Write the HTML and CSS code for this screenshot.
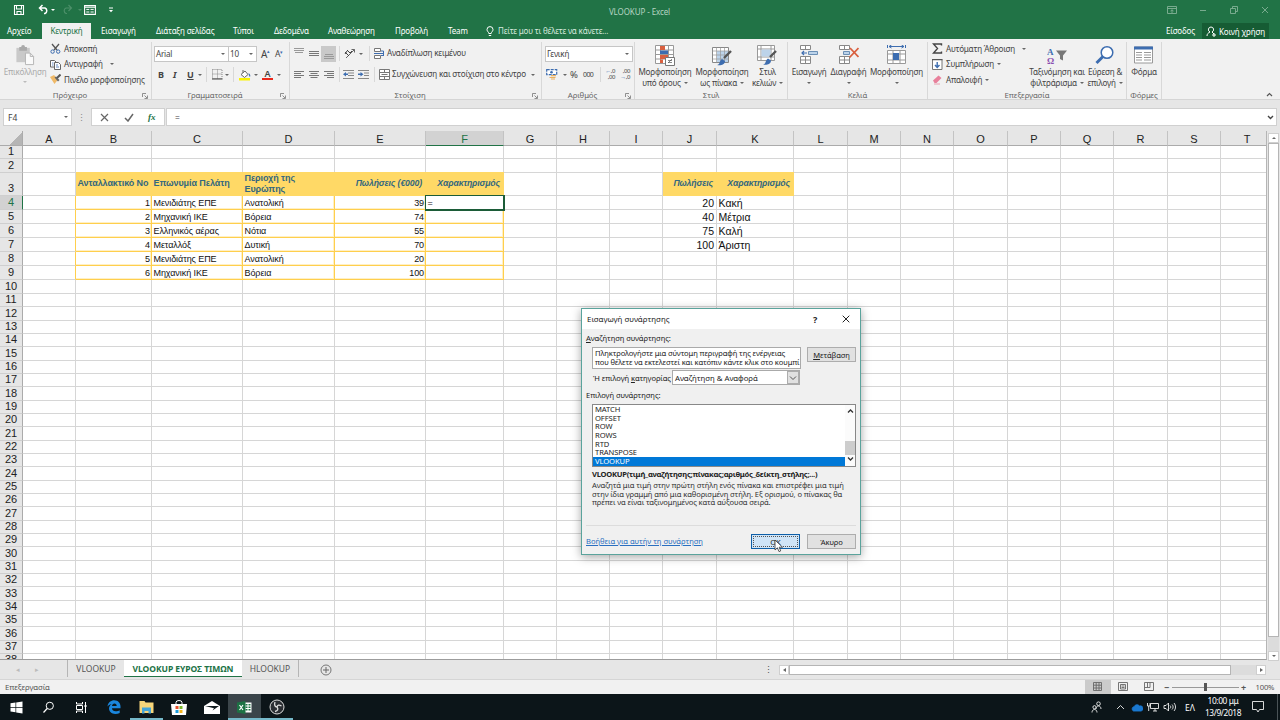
FILE: index.html
```html
<!DOCTYPE html>
<html lang="el">
<head>
<meta charset="utf-8">
<title>VLOOKUP - Excel</title>
<link rel="stylesheet" href="styles.css">
</head>
<body>
<div class="app">
  <header class="titlebar">
    <div class="qat">
      <svg width="12" height="12" viewBox="0 0 12 12"><path d="M1.5 1.5h9v9h-9z M3.5 1.5v3.5h5v-3.5 M4 10.5v-3h4v3" fill="none" stroke="#fff" stroke-width="1.1"/></svg>
      <svg width="12" height="12" viewBox="0 0 12 12"><path d="M4.500 1L1.500 4l3 3M2 4h5a3 3 0 0 1 0 5.500H6" fill="none" stroke="#fff" stroke-width="1.500"/></svg>
      <i class="dn white"></i>
      <svg width="12" height="12" viewBox="0 0 12 12"><path d="M7.500 1l3 3-3 3M10 4H5a3 3 0 0 0 0 5.500h1" fill="none" stroke="#4c8f69" stroke-width="1.200"/></svg>
      <i class="dn faint"></i>
      <svg width="12" height="12" viewBox="0 0 12 12"><path d="M.6 1.600h10.800v8.800H.600z M.6 3.300h10.800" fill="none" stroke="#fff" stroke-width="1.100"/><path d="M2.300 5.400h3M2.300 8h3M6.500 5.400h3.200M6.500 8h3.200" stroke="#fff"/></svg>
      <svg width="6" height="6" viewBox="0 0 6 6"><path d="M1 1h4" stroke="#fff"/><path d="M1 3h4L3 5.300z" fill="#fff"/></svg>
    </div>
    <div class="doc-title">VLOOKUP - Excel</div>
    <div class="win-buttons">
      <svg width="10" height="10" viewBox="0 0 10 10"><path d="M.5 1.500h9v7h-9zM.5 3.500h9M5 8V5M3.500 6L5 4.800 6.500 6" /></svg>
      <svg width="8" height="10" viewBox="0 0 8 10"><path d="M1 5.500h6"/></svg>
      <svg width="8" height="10" viewBox="0 0 8 10"><path d="M.5 3.500h5v5h-5zM2.500 3.500v-2h5v5h-2"/></svg>
      <svg width="8" height="10" viewBox="0 0 8 10"><path d="M1 2l6 6M7 2l-6 6"/></svg>
    </div>
  </header>

  <nav class="tabs">
    <span class="tab t-file">Αρχείο</span>
    <span class="tab active">Κεντρική</span>
    <span class="tab t-insert">Εισαγωγή</span>
    <span class="tab t-layout">Διάταξη σελίδας</span>
    <span class="tab t-formulas">Τύποι</span>
    <span class="tab t-data">Δεδομένα</span>
    <span class="tab t-review">Αναθεώρηση</span>
    <span class="tab t-view">Προβολή</span>
    <span class="tab t-team">Team</span>
    <svg class="bulb" width="8" height="11" viewBox="0 0 8 11"><path d="M2.800 7.500C2.800 6 1 5.500 1 3.600a3 3 0 0 1 6 0C7 5.500 5.200 6 5.200 7.500zM2.800 9.500h2.400" fill="none" stroke="#fff"/></svg>
    <span class="tab t-tell">Πείτε μου τι θέλετε να κάνετε...</span>
    <span class="tab t-login">Είσοδος</span>
    <span class="share"><svg width="11" height="11" viewBox="0 0 11 11"><path d="M5 1a2.600 2.600 0 0 1 1 5L8 8M5 1a2.600 2.600 0 0 0-1 5C2 7 1 8 1 10M6 9h4M8 7v4" fill="none" stroke="#fff"/></svg><b>Κοινή χρήση</b></span>
  </nav>

  <section class="ribbon">
    <div class="group g-clip">
      <div class="body">
        <div class="big paste">
          <svg width="20" height="22" viewBox="0 0 20 22"><path d="M1 3h14v15H1z" fill="#c9c9c9"/><path d="M4 2h2a2 2 0 0 1 4 0h2v4H4z" fill="#a9a9a9"/><path d="M10.500 8.500h5l3.500 3.500v8.500h-8.500zM15.500 8.500V12H19" fill="#fafafa" stroke="#b5b5b5"/></svg>
          <span class="lbl dim">Επικόλληση</span><i class="dn faint2"></i>
        </div>
        <div class="stack clip-list">
          <div class="item"><svg width="11" height="11" viewBox="0 0 11 11"><path d="M2 1l5 6M9 1L4 7" stroke="#555" stroke-width="1.300"/><circle cx="2.600" cy="8.600" r="1.700" fill="none" stroke="#3d6db0"/><circle cx="8.200" cy="8.600" r="1.700" fill="none" stroke="#3d6db0"/></svg><span class="lbl">Αποκοπή</span></div>
          <div class="item"><svg width="11" height="11" viewBox="0 0 11 11"><path d="M.5 1.500h4l1.500 1.500v5H.5z" fill="#fff" stroke="#666"/><path d="M4.500 3.500h4L10.500 5.500v5h-6z" fill="#fff" stroke="#666"/><path d="M6 6h2M6 8h3M2 4h1.500M2 6h1.500" stroke="#3d6db0" stroke-width=".8"/></svg><span class="lbl">Αντιγραφή</span><i class="dn gap5"></i></div>
          <div class="item"><svg width="11" height="11" viewBox="0 0 11 11"><path d="M0 3l4-2 4 4.500L4.500 10z" fill="#efb968"/><path d="M4.500 3.500l3.500 4 1.500-1.500L6 2.500z" fill="#666"/><path d="M7 4l3.500-3.500" stroke="#555" stroke-width="2"/></svg><span class="lbl">Πινέλο μορφοποίησης</span></div>
        </div>
      </div>
      <div class="caption">Πρόχειρο<svg class="launch" width="6" height="6" viewBox="0 0 6 6"><path d="M.5 4V.5H4M2.500 2.500L5 5M5.500 2.500v3h-3" fill="none" stroke="#777" stroke-width=".8"/></svg></div>
    </div>

    <div class="group g-font">
      <div class="body rows">
        <div class="row font-top">
          <span class="combo">Arial<i class="dn"></i></span><span class="combo size">10<i class="dn"></i></span>
          <span class="grow">A<sup>▴</sup></span><span class="grow sm">A<sup>▾</sup></span>
        </div>
        <div class="row font-bot">
          <b>B</b><b class="it">I</b><b class="un">U</b><i class="dn"></i><u class="sep"></u>
          <svg width="11" height="11" viewBox="0 0 11 11"><path d="M.5.500h9.500v9H.500zM5.500.500v9M.5 5h10" fill="none" stroke="#888" stroke-dasharray="1 1"/><path d="M0 10h10.500" stroke="#444"/></svg>
          <i class="dn"></i><u class="sep"></u>
          <svg width="12" height="12" viewBox="0 0 12 12"><path d="M2 5.500L6 2l3 3.500-3.500 3z" fill="#fff" stroke="#666"/><path d="M4 4V1" stroke="#666"/><path d="M9.500 4c2 1 2 3 1.500 4-.8-.500-1.200-2-1.500-4" fill="#3d6db0"/><path d="M0 9h11v2.500H0z" fill="#fbf300"/></svg>
          <i class="dn"></i>
          <span class="fcolor">A</span><i class="dn"></i>
        </div>
      </div>
      <div class="caption">Γραμματοσειρά<svg class="launch" width="6" height="6" viewBox="0 0 6 6"><path d="M.5 4V.5H4M2.500 2.500L5 5M5.500 2.500v3h-3" fill="none" stroke="#777" stroke-width=".8"/></svg></div>
    </div>

    <div class="group g-align">
      <div class="body rows">
        <div class="row al-top">
          <svg width="10" height="11" viewBox="0 0 10 11"><path d="M0 .500h10M0 2.500h10M1 4.500h8" stroke="#999"/></svg>
          <svg width="10" height="11" viewBox="0 0 10 11"><path d="M0 3.500h10M0 5.500h10M0 7.500h10" stroke="#777"/></svg>
          <span class="sel"><svg width="10" height="11" viewBox="0 0 10 11"><path d="M1 6.500h8M0 8.500h10M0 10.500h10" stroke="#999"/></svg></span>
          <u class="sep"></u>
          <svg width="12" height="11" viewBox="0 0 12 11"><path d="M2 10l8.500-8.500M10.500 4.500v-3h-3" fill="none" stroke="#666"/><path d="M1 4l4 4M3 2l3 3M1 6l2-3M6 5l2-2" stroke="#444" fill="none"/></svg>
          <i class="dn"></i><u class="sep"></u>
          <svg width="11" height="11" viewBox="0 0 11 11"><path d="M.5.500h6v3h-6zM.5 7.500h6v3h-6z" fill="#fff" stroke="#777"/><path d="M0 5.500h9.500V8M7 7.500h2.500V3H7" fill="none" stroke="#3d6db0"/></svg>
          <span class="lbl">Αναδίπλωση κειμένου</span>
        </div>
        <div class="row al-bot">
          <svg width="10" height="9" viewBox="0 0 10 9"><path d="M0 1.500h10M0 3.500h7M0 5.500h10M0 7.500h7" stroke="#777"/></svg>
          <svg width="10" height="9" viewBox="0 0 10 9"><path d="M0 1.500h10M1.500 3.500h7M0 5.500h10M1.500 7.500h7" stroke="#777"/></svg>
          <svg width="10" height="9" viewBox="0 0 10 9"><path d="M0 1.500h10M3 3.500h7M0 5.500h10M3 7.500h7" stroke="#777"/></svg>
          <u class="sep"></u>
          <svg width="12" height="9" viewBox="0 0 12 9"><path d="M0 .500h11M5 3h6M5 5.500h6M0 8.500h11" stroke="#888"/><path d="M0 4.200l3-2.200v1.500h2v1.400H3v1.500z" fill="#3d6db0"/></svg>
          <svg width="12" height="9" viewBox="0 0 12 9"><path d="M0 .500h11M6 3h5M6 5.500h5M0 8.500h11" stroke="#888"/><path d="M5.500 4.200l-3-2.200v1.500H0v1.400h2.500v1.500z" fill="#3d6db0"/></svg>
          <u class="sep"></u>
          <svg width="11" height="11" viewBox="0 0 11 11"><path d="M.5.500h10v10H.5zM.5 3.500h10M.5 7.500h10M5.500.500v3M5.500 7.500v3M2.500 5.500h6" fill="#fff" stroke="#777"/></svg>
          <span class="lbl">Συγχώνευση και στοίχιση στο κέντρο</span><i class="dn"></i>
        </div>
      </div>
      <div class="caption">Στοίχιση<svg class="launch" width="6" height="6" viewBox="0 0 6 6"><path d="M.5 4V.5H4M2.500 2.500L5 5M5.500 2.500v3h-3" fill="none" stroke="#777" stroke-width=".8"/></svg></div>
    </div>

    <div class="group g-num">
      <div class="body rows">
        <div class="row"><span class="combo wide">Γενική<i class="dn"></i></span></div>
        <div class="row num-bot">
          <svg width="12" height="11" viewBox="0 0 12 11"><path d="M.7.700h10v5H.7z" fill="#fff" stroke="#3d6db0" stroke-width="1.200" stroke-dasharray="3 1"/><circle cx="5.500" cy="3.200" r="1.300" fill="#3d6db0"/><path d="M5 6h5v1.200H5zM3.500 8h6v1H3.500zM5 9.600h4v1H5z" fill="#e9b060"/></svg>
          <i class="dn"></i><span class="pct">%</span><span class="ooo">000</span><u class="sep"></u>
          <span class="dec"><em>←</em>,0<br>,00</span>
          <span class="dec">,00<br><em>→</em>,0</span>
        </div>
      </div>
      <div class="caption">Αριθμός<svg class="launch" width="6" height="6" viewBox="0 0 6 6"><path d="M.5 4V.5H4M2.500 2.500L5 5M5.500 2.500v3h-3" fill="none" stroke="#777" stroke-width=".8"/></svg></div>
    </div>

    <div class="group g-style">
      <div class="body bigs">
        <div class="big"><svg width="20" height="21" viewBox="0 0 20 21"><path d="M.5.500h18v18H.5zM.5 5h18M.5 9.500h18M.5 14h18M5.500.500v18M13.500.500v18" fill="#fff" stroke="#999"/><path d="M5 1h5v4H5zM5 10h8v4H5z" fill="#d9603f"/><path d="M5 5.500h8V9H5z" fill="#3d6db0"/><path d="M5 14.500h3V18H5z" fill="#d9603f"/><path d="M10.500 12.500h9v8h-9z" fill="#fff" stroke="#777"/><path d="M13 18l4-4M13 15.500h4M13 17.500h4" stroke="#555" stroke-width=".7"/></svg>
          <span class="lbl">Μορφοποίηση</span><span class="lbl">υπό όρους <i class="dn in"></i></span></div>
        <div class="big"><svg width="21" height="21" viewBox="0 0 21 21"><path d="M.5 2.500h16v15H.5z" fill="#fff" stroke="#888"/><path d="M5 6h11v11H5z" fill="#bcd3ea"/><path d="M.5 6h16M.5 10h16M.5 14h16M4.500 2.500v15M8.500 2.500v15M12.500 2.500v15" stroke="#999" stroke-width=".7"/><path d="M12 13l7-7" stroke="#555" stroke-width="2.400"/><path d="M5 20c3 0 2-4 5-6l3 2c0 4-5 5-8 4" fill="#3d6db0"/></svg>
          <span class="lbl">Μορφοποίηση</span><span class="lbl">ως πίνακα <i class="dn in"></i></span></div>
        <div class="big"><svg width="21" height="21" viewBox="0 0 21 21"><path d="M.5.500h17v15H.5zM.5 4h17M.5 12h17M4 .500v15M14 .500v15" fill="#fff" stroke="#999"/><path d="M4.500 4.500h9v7h-9z" fill="#bcd3ea"/><path d="M13 12l6-6" stroke="#555" stroke-width="2.400"/><path d="M6 19.500c3 0 2-4 5-6l3 2c0 4-5 5-8 4" fill="#3d6db0"/></svg>
          <span class="lbl">Στυλ</span><span class="lbl">κελιών <i class="dn in"></i></span></div>
      </div>
      <div class="caption">Στυλ</div>
    </div>

    <div class="group g-cells">
      <div class="body bigs">
        <div class="big"><svg width="19" height="21" viewBox="0 0 19 21"><path d="M.5.500h10v4H.5zM5.500.500v4M.5 11.500h10v7H.5zM.5 15h10M5.500 11.500v7" fill="#fff" stroke="#888"/><path d="M8.500 6.500h9v3h-9z" fill="#bcd3ea" stroke="#6b8fb5"/><path d="M7 8H2M4 6L2 8l2 2" fill="none" stroke="#3d6db0" stroke-width="1.200"/></svg>
          <span class="lbl">Εισαγωγή</span><i class="dn low"></i></div>
        <div class="big"><svg width="20" height="21" viewBox="0 0 20 21"><path d="M.5.500h10v4H.5zM5.500.500v4M.5 11.500h10v7H.5zM.5 15h10M5.500 11.500v7" fill="#fff" stroke="#888"/><path d="M4.500 6.500h6v3h-6z" fill="#bcd3ea" stroke="#6b8fb5"/><path d="M11 3l8.500 9M19.500 3l-9 9.500" stroke="#d9603f" stroke-width="1.800"/></svg>
          <span class="lbl">Διαγραφή</span><i class="dn low"></i></div>
        <div class="big"><svg width="20" height="21" viewBox="0 0 20 21"><path d="M.5 5.500h18v13H.5zM.5 9h18M.5 15h18M6 5.500v13M13 5.500v13" fill="#fff" stroke="#999"/><path d="M2 1.500h15M4.500 0L2 1.500 4.500 3M14.500 0L17 1.500 14.500 3M.5 0v3M18.500 0v3" fill="none" stroke="#3d6db0"/><path d="M6 8h6v7H6z" fill="#3d6db0"/></svg>
          <span class="lbl">Μορφοποίηση</span><i class="dn low"></i></div>
      </div>
      <div class="caption">Κελιά</div>
    </div>

    <div class="group g-edit">
      <div class="body">
        <div class="stack edit-list">
          <div class="item"><svg width="11" height="11" viewBox="0 0 11 11"><path d="M9.500 2.500V1H1.500L5.500 5.500 1.500 10h8V8.500" fill="none" stroke="#444" stroke-width="1.400"/></svg><span class="lbl">Αυτόματη Άθροιση</span><i class="dn gap5"></i></div>
          <div class="item"><svg width="11" height="11" viewBox="0 0 11 11"><path d="M.5.500h9.500v10H.5z" fill="#fff" stroke="#777"/><path d="M0 .500h10.500" stroke="#555" stroke-width="1.500"/><path d="M5.200 3v5M3 6l2.200 2.500L7.500 6" fill="none" stroke="#3d6db0" stroke-width="1.400"/></svg><span class="lbl">Συμπλήρωση</span><i class="dn"></i></div>
          <div class="item"><svg width="11" height="11" viewBox="0 0 11 11"><path d="M1 6.500L6.500 1.500l3 2.500L4.500 9H2.500z" fill="#e8809b"/><path d="M2 10h6" stroke="#e8a0b0"/></svg><span class="lbl">Απαλοιφή</span><i class="dn"></i></div>
        </div>
        <div class="big sort"><svg width="20" height="20" viewBox="0 0 20 20"><text x="0" y="9" class="ic-a">A</text><text x="0" y="18" class="ic-o">Ω</text><path d="M9 5h11l-4 5v5l-3-1.500V10z" fill="#777"/></svg>
          <span class="lbl">Ταξινόμηση και</span><span class="lbl">φιλτράρισμα <i class="dn in"></i></span></div>
        <div class="big find"><svg width="20" height="20" viewBox="0 0 20 20"><path d="M8.500 10.500L1.500 17.500" stroke="#3d6db0" stroke-width="3"/><circle cx="12" cy="7" r="5.800" fill="#fff" stroke="#3d6db0" stroke-width="1.500"/></svg>
          <span class="lbl">Εύρεση &amp;</span><span class="lbl">επιλογή <i class="dn in"></i></span></div>
      </div>
      <div class="caption">Επεξεργασία</div>
    </div>

    <div class="group g-form">
      <div class="body bigs">
        <div class="big"><svg width="20" height="20" viewBox="0 0 20 20"><path d="M.5 1.500h18v16H.5z" fill="#fff" stroke="#999"/><path d="M0 1h19v3H0z" fill="#3d6db0"/><path d="M2 7h6M2 9.500h6M2 12h6M2 14.500h6M10 7h7M10 9.500h7M10 12h7M10 14.500h7" stroke="#999"/></svg>
          <span class="lbl">Φόρμα</span></div>
      </div>
      <div class="caption">Φόρμες</div>
    </div>
    <svg class="collapse" width="7" height="5" viewBox="0 0 7 5"><path d="M1 4l2.500-2.500L6 4" fill="none" stroke="#555" stroke-width="1.200"/></svg>
  </section>

  <section class="formula">
    <div class="namebox">F4<i class="dn"></i></div>
    <div class="dots">⋮</div>
    <div class="fx">
      <svg width="9" height="9" viewBox="0 0 9 9"><path d="M1 1l7 7M8 1L1 8" stroke="#666" stroke-width="1.200"/></svg>
      <svg width="10" height="9" viewBox="0 0 10 9"><path d="M1 5l3 3 5-7" fill="none" stroke="#666" stroke-width="1.500"/></svg>
      <span>fx</span>
    </div>
    <div class="input">=<svg width="7" height="5" viewBox="0 0 7 5"><path d="M1 1l2.500 2.500L6 1" fill="none" stroke="#444" stroke-width="1.400"/></svg></div>
  </section>

  <main class="work">
    <div class="grid" id="grid"></div>
    <div class="vscroll"><div class="arrow"><i class="up"></i></div><div class="thumb"></div><div class="track"></div><div class="arrow"><i class="dn"></i></div></div>
  </main>

  <section class="sheets">
    <span class="nav">◂</span><span class="nav n2">▸</span>
    <span class="sheet s1">VLOOKUP</span><span class="sheet on">VLOOKUP ΕΥΡΟΣ ΤΙΜΩΝ</span><span class="sheet s3">HLOOKUP</span>
    <svg class="plus" width="12" height="12" viewBox="0 0 12 12"><circle cx="6" cy="6" r="5" fill="none" stroke="#777"/><path d="M6 3v6M3 6h6" stroke="#666"/></svg>
    <span class="grip">⋮</span>
    <div class="hscroll"><div class="arrow"><i class="lf"></i></div><div class="hthumb"></div><div class="htrack"></div><div class="arrow"><i class="rt"></i></div></div>
  </section>

  <section class="status">
    <span class="mode">Επεξεργασία</span>
    <span class="view cur"><svg width="10" height="10" viewBox="0 0 10 10"><path d="M.5.500h8v8h-8zM.5 3.200h8M.5 6h8M3.200.500v8M6 .500v8" /></svg></span>
    <span class="view"><svg width="10" height="10" viewBox="0 0 10 10"><path d="M.5.500h9v8h-9zM2.500 2.500h5v4.500h-5zM3.500 4h3M3.500 5.500h3" /></svg></span>
    <span class="view"><svg width="10" height="10" viewBox="0 0 10 10"><path d="M.5.500h9v8h-9zM3.500.500v5M.5 5.500h5.500v-5" /></svg></span>
    <span class="zm">−</span><span class="slider"><i></i></span><span class="zm">+</span><span class="pc">100%</span>
  </section>

  <footer class="taskbar">
    <span class="tb"><svg width="13" height="13" viewBox="0 0 13 13"><path d="M.5 2.300l5-.8V6h-5zM6.200 1.400L12.500.5V6H6.200zM.5 6.700h5v4.600l-5-.7zM6.200 6.700h6.300v5.800l-6.300-.9z" fill="#fff"/></svg></span>
    <span class="tb"><svg width="13" height="13" viewBox="0 0 13 13"><circle cx="7.800" cy="4.800" r="3.600" fill="none" stroke="#fff"/><path d="M5.200 7.500L1.500 11.500" stroke="#fff" stroke-width="1.200"/></svg></span>
    <span class="tb"><svg width="13" height="13" viewBox="0 0 13 13"><path d="M1.500 1v2h6V1M1.500 4.500h6v4h-6zM1.500 12v-2h6v2M10.500 1v11" fill="none" stroke="#fff"/><path d="M9.500 4h2v2h-2z" fill="#fff"/></svg></span>
    <span class="tb edge"><svg width="14" height="14" viewBox="0 0 14 14"><path d="M.5 6.500C1 2.500 4 .3 7.200.3c4 0 6.300 3 6.300 6.200v1.800H5c0 2 1.700 3 3.700 3 1.600 0 3-.4 4-1v2.700c-1.300.6-2.700.9-4.400.9C4.500 13.900 2 11.500 2 8.500c0-2 1-3.600 2.700-4.600-1.500.2-3 1-4.200 2.600zM5 5.900h4.700c0-1.500-.8-2.400-2.200-2.400S5.200 4.500 5 5.900z" fill="#1a86dd"/></svg></span>
    <span class="tb open"><svg width="15" height="13" viewBox="0 0 15 13"><path d="M.5 0h5l1 1.500h8V12H.5z" fill="#f7d67a"/><path d="M3 6.500h9v6H9.500V10h-4v2.500H3z" fill="#45a5d8"/></svg></span>
    <span class="tb store"><svg width="16" height="15" viewBox="0 0 16 15"><path d="M5 4V2.500a3 2 0 0 1 6 0V4" fill="none" stroke="#fff"/><path d="M0 4h16l-1 11H1z" fill="#fff"/><path d="M4.500 6h3v3h-3z" fill="#e8502c"/><path d="M8.500 6h3v3h-3z" fill="#7db82d"/><path d="M4.500 10h3v3h-3z" fill="#1a9bdc"/><path d="M8.500 10h3v3h-3z" fill="#f5b41c"/></svg></span>
    <span class="tb"><svg width="16" height="13" viewBox="0 0 16 13"><path d="M0 5L8 0l8 5v8H0z" fill="#fff"/><path d="M1 5h14L8.500 9.500 10 7.200z" fill="#101a1e"/></svg></span>
    <span class="tb open cur"><svg width="15" height="13" viewBox="0 0 15 13"><path d="M7 1.500h7.500v10H7z" fill="#fff"/><path d="M8.500 3h2v1.500h-2zM11.500 3h2v1.500h-2zM8.500 5.500h2V7h-2zM11.500 5.500h2V7h-2zM8.500 8h2v1.500h-2zM11.500 8h2v1.500h-2z" fill="#217346"/><path d="M0 1.500L8.500 0v13L0 11.500z" fill="#1d7244"/><path d="M2.500 4l3.500 5M6 4L2.500 9" stroke="#fff" stroke-width="1.200"/></svg></span>
    <span class="tb open last"><svg width="16" height="16" viewBox="0 0 16 16"><circle cx="8" cy="8" r="7" fill="#2b2e33" stroke="#ddd" stroke-width="1"/><path d="M6 3c-1 3 0 5 2 5M12.500 7C10 5.500 8.500 6 8 8M6 12.500C9 12 9.500 10 8 8" fill="none" stroke="#ddd" stroke-width="1.300"/></svg></span>
    <div class="tray">
      <svg width="11" height="12" viewBox="0 0 11 12"><circle cx="7.500" cy="2.700" r="1.800"/><path d="M5 8c0-4 5-4 5 0"/><circle cx="3.500" cy="6.200" r="1.600"/><path d="M1 11.500c0-4 5-4 5 0"/></svg>
      <svg class="m-up" width="9" height="6" viewBox="0 0 9 6"><path d="M1 5l3.500-3.500L8 5"/></svg>
      <svg class="m-cloud" width="12" height="9" viewBox="0 0 12 9"><path class="cloud" d="M2.500 8A2.200 2.200 0 0 1 3 3.800 3.200 3.200 0 0 1 8.500 3a2.500 2.500 0 0 1 1.700 5z"/></svg>
      <svg class="m-net" width="12" height="10" viewBox="0 0 12 10"><path d="M3.500 1.500h8v5h-8zM6 9h4M8 6.500V9M.5 1v3h2.500V1M1.700 4v5"/></svg>
      <svg class="m-vol" width="13" height="10" viewBox="0 0 13 10"><path d="M1 3.500h2L5.500 1v8L3 6.500H1zM7 3.500c1 1 1 2 0 3M9 2.500c1.500 1.500 1.500 3.500 0 5M11 1c2 2.500 2 5.500 0 8"/></svg>
      <span class="lang">ΕΛ</span>
      <span class="clock">10:00 μμ<br>13/9/2018</span>
      <svg class="m-note" width="12" height="12" viewBox="0 0 12 12"><path d="M.5.500h11v8H7.500L6 11 4.500 8.500h-4z"/></svg>
    </div>
  </footer>
</div>

<div class="dialog">
  <div class="d-title"><span>Εισαγωγή συνάρτησης</span><b>?</b><svg width="8" height="8" viewBox="0 0 8 8"><path d="M.7.700l6.600 6.600M7.300.700L.7 7.300" stroke="#222" fill="none"/></svg></div>
  <div class="d-body">
    <div class="d-l1"><u>Α</u>ναζήτηση συνάρτησης:</div>
    <div class="d-search"><div class="d-text">Πληκτρολογήστε μια σύντομη περιγραφή της ενέργειας<br>που θέλετε να εκτελεστεί και κατόπιν κάντε κλικ στο κουμπί</div><div class="btn"><span><u>Μ</u>ετάβαση</span></div></div>
    <div class="d-cat"><span>Ή επιλογή <u>κ</u>ατηγορίας</span><div class="d-sel"><span>Αναζήτηση &amp; Αναφορά</span><b><svg width="8" height="6" viewBox="0 0 8 6"><path d="M1 1.500l3 3 3-3" fill="none" stroke="#555"/></svg></b></div></div>
    <div class="d-l2">Επιλογή συνάρτησης:</div>
    <div class="d-list">
      <ul><li>MATCH</li><li>OFFSET</li><li>ROW</li><li>ROWS</li><li>RTD</li><li>TRANSPOSE</li><li class="hot">VLOOKUP</li></ul>
      <div class="d-bar"><svg width="7" height="6" viewBox="0 0 7 6"><path d="M1 4.500L3.500 2 6 4.500" fill="none" stroke="#333" stroke-width="1.300"/></svg><i></i><svg width="7" height="6" viewBox="0 0 7 6"><path d="M1 1.500L3.500 4 6 1.500" fill="none" stroke="#333" stroke-width="1.300"/></svg></div>
    </div>
    <div class="d-sig">VLOOKUP(τιμή_αναζήτησης;πίνακας;αριθμός_δείκτη_στήλης;...)</div>
    <div class="d-desc">Αναζητά μια τιμή στην πρώτη στήλη ενός πίνακα και επιστρέφει μια τιμή<br>στην ίδια γραμμή από μια καθορισμένη στήλη. Εξ ορισμού, ο πίνακας θα<br>πρέπει να είναι ταξινομημένος κατά αύξουσα σειρά.</div>
    <div class="d-foot"><a>Βοήθεια για αυτήν τη συνάρτηση</a><div class="btn ok"><span>OK</span></div><div class="btn"><span>Άκυρο</span></div></div>
  </div>
  <svg class="cursor" width="10" height="14" viewBox="0 0 10 14"><path d="M1 1v10l2.400-2.200 1.600 3.800 1.700-.7L5.200 8.200H8.500z" fill="#fff" stroke="#333" stroke-width=".8"/></svg>
</div>
<script src="grid.js"></script>
</body>
</html>
```

FILE: grid.js
```js
const columns = "ABCDEFGHIJKLMNOPQRST".split("");
const rowCount = 38;
const cells = {
  B3: ["Ανταλλακτικό Νο", "head"], C3: ["Επωνυμία Πελάτη", "head"], D3: ["Περιοχή της<br>Ευρώπης", "head"],
  E3: ["Πωλήσεις (€000)", "head num"], F3: ["Χαρακτηρισμός", "head num"],
  J3: ["Πωλήσεις", "head num"], K3: ["Χαρακτηρισμός", "head num"],
  F4: ["=", "edit"]
};
const orders = [
  ["Μενιδιάτης ΕΠΕ", "Ανατολική", 39], ["Μηχανική ΙΚΕ", "Βόρεια", 74], ["Ελληνικός αέρας", "Νότια", 55],
  ["Μεταλλόξ", "Δυτική", 70], ["Μενιδιάτης ΕΠΕ", "Ανατολική", 20], ["Μηχανική ΙΚΕ", "Βόρεια", 100]
];
orders.forEach(([name, region, sales], i) => {
  const r = i + 4;
  cells["A" + r] = ["", "edge-l"];
  cells["B" + r] = [i + 1, "boxed num"];
  cells["C" + r] = [name, "boxed"];
  cells["D" + r] = [region, "boxed"];
  cells["E" + r] = [sales, "boxed num"];
  if (r > 4) cells["F" + r] = ["", "boxed"];
});
[[20, "Κακή"], [40, "Μέτρια"], [75, "Καλή"], [100, "Άριστη"]].forEach(([n, t], i) => {
  cells["J" + (i + 4)] = [n, "look num"];
  cells["K" + (i + 4)] = [t, "look"];
});

let html = '<div class="corner"></div>';
columns.forEach(c => { html += `<div class="col${c === "F" ? " picked" : ""}">${c}</div>`; });
for (let r = 1; r <= rowCount; r++) {
  html += `<div class="rown${r === 4 ? " picked" : ""}">${r}</div>`;
  columns.forEach(c => {
    const [text, cls] = cells[c + r] || ["", ""];
    html += `<div class="cell ${cls}">${text === "" ? "" : `<span>${text}</span>`}</div>`;
  });
}
document.getElementById("grid").innerHTML = html;
```

FILE: styles.css
```css
* { box-sizing: border-box; }
body { margin: 0; width: 1280px; height: 720px; overflow: hidden; font-family: "Noto Sans", "Open Sans", sans-serif; font-size: 8px; color: #444; position: relative; }
svg { display: block; flex: none; }
i, em { font-style: normal; }
.app { display: flex; flex-direction: column; height: 720px; background: #e6e6e6; }

.dn { display: inline-block; flex: none; width: 0; height: 0; border: 2px solid transparent; border-top: 2.5px solid #666; border-bottom: 0; }
.dn.white { border-top-color: #fff; }
.dn.faint { border-top-color: #4c8f69; }
.dn.faint2 { border-top-color: #bbb; margin-top: 3px; }
.dn.in { vertical-align: 2px; margin-left: 1px; }
.dn.low { margin-top: 4px; }
.dn.gap5 { margin-left: 4px; }
.up { border: 2px solid transparent; border-bottom: 2.5px solid #666; border-top: 0; }
.lf { border: 2px solid transparent; border-right: 3px solid #666; border-left: 0; }
.rt { border: 2px solid transparent; border-left: 3px solid #666; border-right: 0; }

/* title bar */
.titlebar { height: 23px; background: #217346; display: grid; grid-template-columns: 400px 479px 401px; align-items: center; }
.qat { display: grid; grid-template-columns: 25px 13px 10px 17px 6px 24px 10px; padding: 0 0 3px 13px; align-items: center; }
.doc-title { text-align: center; color: #b5d3c2; font-size: 8px; letter-spacing: -.1px; }
.win-buttons { display: grid; grid-template-columns: 32px 31px 31px 10px; padding: 0 0 3px 288px; }
.win-buttons path { fill: none; stroke: #82b196; stroke-width: .9; }

.tabs { height: 16px; background: #217346; display: flex; align-items: center; color: #fff; font-size: 8px; letter-spacing: -.15px; white-space: nowrap; }
.tab { line-height: 16px; flex: none; }
.t-file { width: 42px; padding-left: 7px; }
.tab.active { width: 49px; text-align: center; background: #f1f1f1; color: #217346; height: 16px; }
.t-insert { width: 65px; padding-left: 10px; }
.t-layout { width: 77px; }
.t-formulas { width: 41px; }
.t-data { width: 54px; }
.t-review { width: 67px; }
.t-view { width: 53px; }
.t-team { width: 38px; }
.bulb { margin-right: 4px; }
.t-tell { width: 668px; color: #d6e9de; }
.t-login { width: 36px; }
.share { background: #165c34; height: 16px; width: 67px; display: flex; align-items: center; gap: 2px; padding-left: 4px; }
.share b { font-weight: 400; }

/* ribbon */
.ribbon { height: 61px; background: #f1f1f1; display: flex; border-bottom: 1px solid #d5d5d5; padding-top: 3px; position: relative; font-size: 8.1px; letter-spacing: -.2px; white-space: nowrap; }
.group { border-right: 1px solid #d8d8d8; height: 57px; display: flex; flex-direction: column; flex: none; }
.body { height: 48px; display: flex; flex: none; }
.caption { line-height: 10px; text-align: center; font-size: 7.800px; letter-spacing: -.1px; color: #666; position: relative; flex: none; }
.g-clip .caption, .g-font .caption, .g-align .caption, .g-num .caption { padding-right: 11px; }
.launch { position: absolute; right: 3px; top: 3px; }
.lbl { line-height: 10.500px; }
.dim { color: #aaa; }
.g-clip { width: 152px; } .g-font { width: 138px; } .g-align { width: 252px; } .g-num { width: 93px; }
.g-style { width: 153px; } .g-cells { width: 140px; } .g-edit { width: 199px; } .g-form { width: 35px; }
.big { display: flex; flex-direction: column; align-items: center; padding-top: 3px; }
.big > svg { height: 21px; margin-bottom: 1px; }
.big .lbl { display: block; }
.big.paste { width: 50px; }
.stack { display: flex; flex-direction: column; margin-top: -1px; }
.item { display: flex; align-items: center; height: 15.500px; gap: 3px; }

.rows { flex-direction: column; padding-top: 3px; }
.row { height: 17px; display: flex; align-items: center; }
.row + .row { margin-top: 4px; }
.combo { border: 1px solid #c6c6c6; background: #fff; height: 16px; width: 75px; display: flex; justify-content: space-between; align-items: center; padding: 0 3px 0 1px; }
.combo.size { width: 29px; margin-left: -1px; }
.combo.wide { width: 88px; margin-left: 3px; }
.sep { width: 1px; height: 15px; background: #d8d8d8; }
.font-top { padding-left: 2px; }
.grow { font-size: 10px; margin-left: 4px; display: flex; }
.grow.sm { font-size: 8.500px; margin-left: 5px; }
.grow sup { font-size: 5px; color: #3d6db0; line-height: 8px; }
.font-bot { display: grid; grid-template-columns: 15px 14px 11px 8px 6px 13px 8px 6px 15px 8px 15px 6px; padding-left: 6px; font-size: 9px; }
.it { font-style: italic; }
.un { text-decoration: underline; }
.fcolor { border-bottom: 2.500px solid #e8281c; width: 11px; text-align: center; line-height: 9px; font-weight: 600; }
.al-top { display: grid; grid-template-columns: 15px 12px 18px 5px 15px 10px 5px 13px auto; padding-left: 4px; justify-content: start; }
.al-bot { display: grid; grid-template-columns: 15px 15px 15px 4px 15px 16px 5px 13px 139px auto; padding-left: 4px; justify-content: start; }
.sel { background: #c9c9c9; width: 15px; height: 16px; display: flex; align-items: center; justify-content: center; }
.num-bot { display: grid; grid-template-columns: 17px 7px 13px 17px 4px 15px 13px; padding-left: 4px; }
.pct { font-size: 9.500px; }
.ooo { font-size: 7px; letter-spacing: -.6px; }
.dec { font-size: 6px; line-height: 5.500px; letter-spacing: -.4px; text-align: right; width: 11px; }
.dec em { color: #3d6db0; }
.bigs { justify-content: flex-start; }
.g-style .big:nth-child(1) { width: 60px; } .g-style .big:nth-child(2) { width: 54px; } .g-style .big:nth-child(3) { width: 37px; }
.g-cells .big:nth-child(1) { width: 42px; } .g-cells .big:nth-child(2) { width: 37px; } .g-cells .big:nth-child(3) { width: 59px; }
.edit-list { padding-left: 4px; width: 100px; }
.big.sort { width: 58px; } .big.find { width: 38px; }
.ic-a { font: 700 9px "Liberation Serif", serif; fill: #3d6db0; }
.ic-o { font: 700 9px "Liberation Serif", serif; fill: #8a4fb0; }
.g-form .big { width: 34px; }
.collapse { position: absolute; right: 7px; bottom: 2px; }

/* formula bar */
.formula { height: 31px; flex: none; display: flex; padding: 8px 3px 5px 3px; font-size: 8.500px; }
.formula > div { height: 18px; background: #fff; border: 1px solid #d0d0d0; display: flex; align-items: center; }
.namebox { width: 69px; justify-content: space-between; padding: 0 3px 0 4px; }
.formula > .dots { width: 19px; background: none; border: 0; justify-content: center; color: #888; }
.formula > .fx { width: 74px; display: grid; grid-template-columns: 24px 24px 14px; padding-left: 8px; }
.fx span { color: #217346; font: italic 700 9px "Liberation Serif", serif; }
.input { flex: 1; margin-left: 1px; justify-content: space-between; padding: 0 2px 0 8px; }

/* worksheet */
.work { height: 529px; flex: none; display: flex; justify-content: space-between; padding-right: 1px; }
.grid { width: 1267px; height: 529px; overflow: hidden; display: grid; font-family: "Liberation Sans", Arial, sans-serif;
  grid-template-columns: 23px 53px 76px 91px 92px 91px 78px 53px 53px 53px 54px 77px 54px 53px 53px 54px 53px 53px 54px 53px 46px;
  grid-template-rows: 15px 13px 14px 23px 14px 14px 14px 14px 14px 14px 14px repeat(28, 13.333px); border-right: 1px solid #b5b5b5; border-bottom: 1px solid #9c9c9c; }
.corner, .col { border-bottom: 1px solid #ababab; background: #e6e6e6; }
.corner { background: linear-gradient(135deg, #e6e6e6 65%, #b5b5b5 65%); border-right: 1px solid #ababab; }
.col { font-size: 11px; line-height: 16px; text-align: center; color: #222; border-right: 1px solid #c3c3c3; }
.col:nth-child(21) { padding-left: 6px; border-right: 0; }
.rown { font-size: 11px; line-height: 13px; text-align: center; color: #222; background: #e6e6e6; border-right: 1px solid #ababab; border-bottom: 1px solid #cfcfcf; display: flex; flex-direction: column; justify-content: flex-end; min-height: 0; overflow: hidden; }
.rown:last-of-type { justify-content: flex-start; }
.col.picked { background: #d2d2d2; color: #217346; border-bottom: 1px solid #217346; }
.rown.picked { background: #d2d2d2; color: #217346; border-right: 1px solid #217346; }
.cell { background: #fff; border-right: 1px solid #d6d6d6; border-bottom: 1px solid #d6d6d6; font-size: 9px; letter-spacing: -.08px; color: #111; display: flex; align-items: center; padding: 1px 1px 0 1.500px; white-space: nowrap; min-width: 0; min-height: 0; }
.boxed { border-right: 1px solid #ffcf4d; border-bottom: 1px solid #ffcf4d; box-shadow: inset -1px -1px #fff0c6; }
.edge-l { border-right: 1px solid #ffcf4d; }
.num { justify-content: flex-end; }
.head { background: #ffd966; border-color: #ffd966; color: #33677f; font-weight: 700; line-height: 11.500px; margin-top: -1px; }
.head.num { font-style: italic; padding-right: 3px; font-size: 8.700px; letter-spacing: -.12px; }
.look { font-size: 10.500px; padding-right: 2px; letter-spacing: 0; }
.edit { outline: 1px solid #1c5c38; border-color: #1c5c38; z-index: 1; }

.vscroll { width: 11px; padding-top: 2px; display: flex; flex-direction: column; height: 530px; }
.arrow { background: #fff; border: 1px solid #cfcfcf; display: flex; align-items: center; justify-content: center; height: 10px; flex: none; }
.thumb { height: 494px; background: #fff; border: 1px solid #b5b5b5; flex: none; }
.track { flex: 1; background: #dcdcdc; }

.sheets { height: 19px; flex: none; display: flex; align-items: center; font-size: 8.500px; color: #555; white-space: nowrap; }
.nav { padding-left: 16px; color: #bbb; font-size: 7px; box-sizing: content-box; width: 3px; }
.n2 { padding-left: 16px; width: 32px; }
.sheet { height: 17px; line-height: 18px; align-self: flex-start; text-align: center; }
.s1 { width: 57px; border-left: 1px solid #b5b5b5; }
.sheet.on { width: 118px; background: #fff; color: #217346; font-weight: 700; border-bottom: 1px solid #217346; letter-spacing: -.05px; }
.s3 { width: 57px; border-right: 1px solid #b5b5b5; }
.plus { margin-left: 21px; }
.grip { margin: 0 4px 0 429px; width: 14px; text-align: center; }
.hscroll { width: 487px; display: flex; }
.hscroll .arrow { width: 10px; height: 10px; }
.hthumb { width: 442px; background: #fff; border: 1px solid #b5b5b5; }
.htrack { flex: 1; background: #dcdcdc; }

.status { height: 15px; flex: none; background: #f1f1f1; display: flex; align-items: center; border-top: 1px solid #d5d5d5; font-size: 8px; color: #555; }
.mode { width: 1085px; padding: 0 0 1px 5px; font-size: 7.800px; letter-spacing: -.1px; }
.view { width: 25.500px; height: 14px; display: flex; align-items: center; justify-content: center; }
.view.cur { background: #cbcbcb; }
.view path { fill: none; stroke: #666; stroke-width: .9; }
.zm { width: 10px; font-size: 9px; font-weight: 700; text-align: center; }
.slider { width: 67px; height: 10px; background: linear-gradient(#999, #999) 0 5px / 100% 1px no-repeat; display: flex; justify-content: center; }
.slider i { width: 3px; height: 8px; background: #555; margin-top: 1px; }
.pc { margin-left: 7px; font-size: 7.700px; letter-spacing: -.2px; }

.taskbar { height: 26px; flex: none; background: #0c1519; display: flex; color: #fff; }
.tb { width: 32.600px; height: 26px; display: flex; align-items: center; justify-content: center; flex: none; }
.tb.open { box-shadow: inset 0 -2px #76b9ca; }
.tb.cur { background: #3b454a; }
.tray { margin-left: auto; display: flex; align-items: center; padding-right: 13px; margin-right: 2px; border-right: 1px solid #4a5357; }
.tray path, .tray circle { fill: none; stroke: #eee; stroke-width: .9; }
.tray .cloud { fill: #1a78d0; stroke: #1a78d0; }
.m-up { margin-left: 14px; } .m-cloud { margin-left: 6px; } .m-net { margin-left: 4px; } .m-vol { margin-left: 4px; }
.lang { margin-left: 9px; font-size: 8.500px; width: 12px; }
.clock { width: 40px; margin: 0 9px 0 6px; text-align: center; line-height: 12px; font-size: 8.400px; letter-spacing: -.4px; white-space: nowrap; }

/* insert function dialog */
.dialog { position: absolute; left: 581px; top: 308px; width: 280px; height: 247px; background: #f0f0f0; border: 1px solid #5aa39c; box-shadow: 0 2px 9px rgba(0, 0, 0, .35); color: #222; font-size: 7.600px; letter-spacing: -.08px; white-space: nowrap; }
.d-title { height: 20px; background: #fff; display: flex; align-items: center; padding-left: 5px; }
.d-title span { width: 226px; font-size: 7.900px; letter-spacing: 0; }
.d-title b { width: 29px; font-size: 9px; }
.d-body { padding: 4px 4px 0; }
.d-l1 { line-height: 11px; }
.d-search { display: flex; justify-content: space-between; margin-top: 3px; padding-left: 6px; }
.d-text { width: 209px; height: 22px; background: #fff; border: 1px solid #aaa; line-height: 9px; padding: 1px 0 0 2px; letter-spacing: -.12px; }
.btn { width: 49px; height: 15px; background: #e1e1e1; border: 1px solid #adadad; display: flex; align-items: center; justify-content: center; }
.d-cat { display: flex; align-items: center; margin-top: 1px; padding-left: 7px; }
.d-cat > span { width: 79px; }
.d-sel { width: 128px; height: 15px; border: 1px solid #aaa; background: #fff; display: flex; justify-content: space-between; align-items: center; padding-left: 2px; font-size: 7.800px; letter-spacing: -.03px; }
.d-sel b { width: 12px; height: 13px; background: #e1e1e1; border: 1px solid #adadad; display: flex; align-items: center; justify-content: center; }
.d-l2 { line-height: 11px; margin-top: 5px; }
.d-list { height: 63px; margin: 3px 0 0 6px; background: #fff; border: 1px solid #888; display: flex; }
.d-list ul { list-style: none; margin: 0; padding: 0 0 0; width: 252px; }
.d-list li { line-height: 8.700px; height: 8.700px; padding-left: 2px; }
.d-list .hot { background: #0078d7; color: #fff; height: 9px; }
.d-bar { flex: 1; display: flex; flex-direction: column; align-items: center; padding: 3px 0; background: #fbfbfb; }
.d-bar i { width: 10px; height: 14px; background: #cdcdcd; margin: 27px 0 1px; }
.d-sig { font-weight: 700; margin: 2px 0 0 6px; line-height: 11px; letter-spacing: -.27px; }
.d-desc { margin: 1px 0 0 6px; line-height: 8.700px; height: 44px; color: #333; letter-spacing: -.11px; }
.d-foot { border-top: 1px solid #dcdcdc; display: flex; padding-top: 8px; align-items: center; gap: 7px; }
.d-foot a { color: #2a6fc0; text-decoration: underline; flex: 1; padding-bottom: 2px; letter-spacing: -.02px; }
.btn.ok { border-color: #0f5fa8; background: #cfe4f7; outline: 1px dotted #555; outline-offset: -3px; }
.cursor { position: absolute; left: 192px; top: 230px; }
```
